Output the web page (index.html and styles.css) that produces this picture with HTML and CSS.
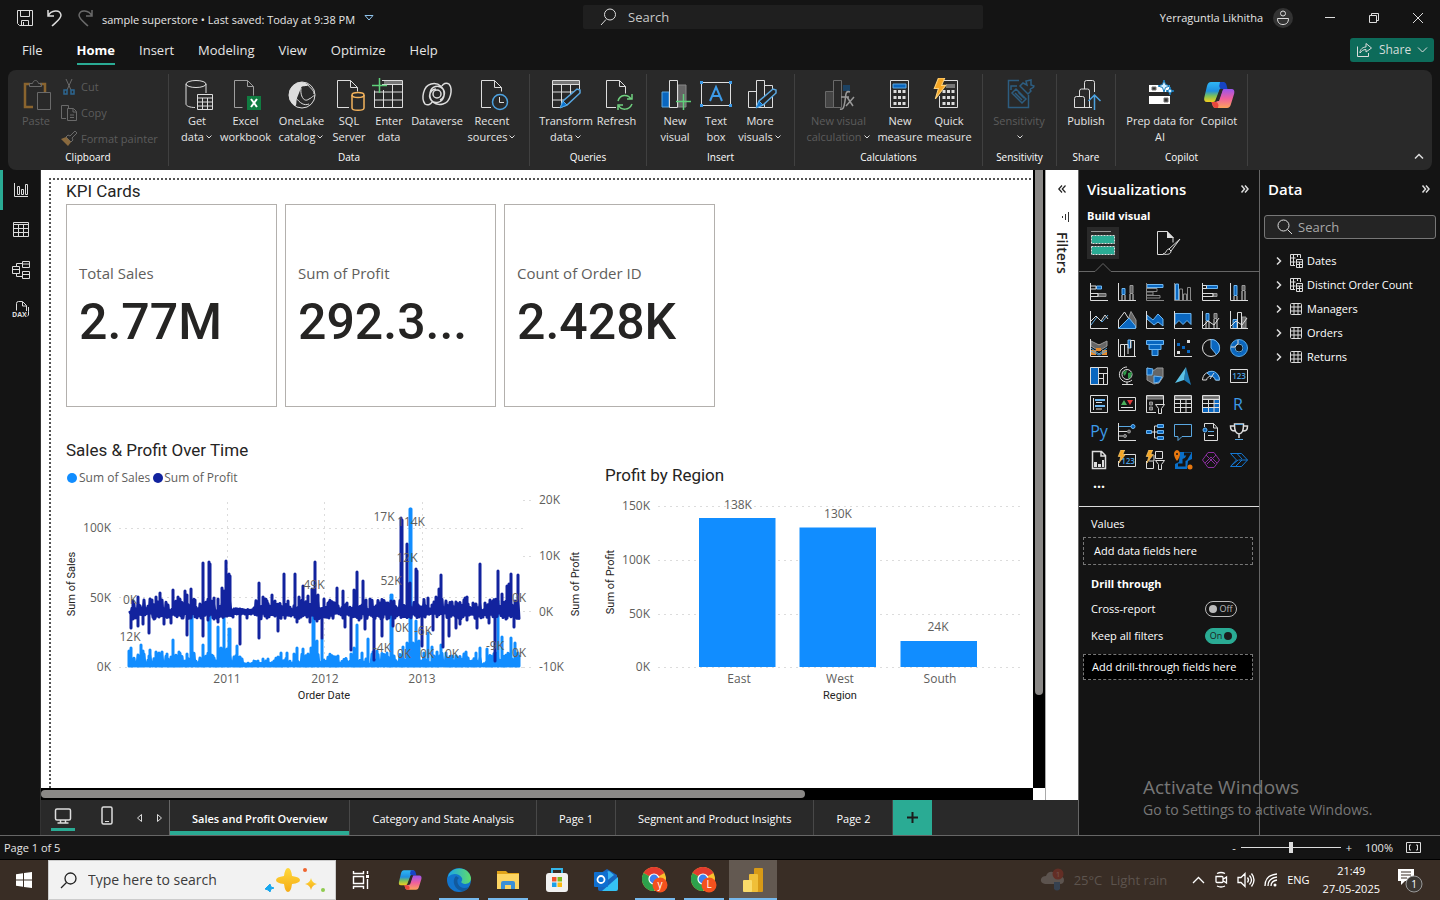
FILE: index.html
```html
<!DOCTYPE html>
<html lang="en">
<head>
<meta charset="utf-8">
<title>sample superstore</title>
<link rel="stylesheet" href="styles.css">
</head>
<body>
<svg class="defs" aria-hidden="true">
  <defs>
    <linearGradient id="cpA" x1="0" y1="0" x2="0" y2="1"><stop offset="0" stop-color="#2fb7f5"/><stop offset=".45" stop-color="#1f8fe0"/><stop offset=".7" stop-color="#7cc15a"/><stop offset="1" stop-color="#f5cf1d"/></linearGradient>
    <linearGradient id="cpB" x1="0" y1="0" x2="0" y2="1"><stop offset="0" stop-color="#9a55ee"/><stop offset=".5" stop-color="#ef5f9e"/><stop offset="1" stop-color="#fca35a"/></linearGradient>
    <linearGradient id="edge" x1="0" y1="0" x2="1" y2="0"><stop offset="0" stop-color="#1ba6e8"/><stop offset="1" stop-color="#5fdc6a"/></linearGradient>
    <linearGradient id="gold" x1="0" y1="0" x2="0" y2="1"><stop offset="0" stop-color="#ffd93b"/><stop offset="1" stop-color="#f5ab16"/></linearGradient>
    <symbol id="copilot" viewBox="0 0 32 32">
      <path d="M8 3h11c2 0 3 1 3.500 3l1 3h-4c-2 0-3 1-3.500 3l-3.500 9c-.6 2-1.500 2-4 2H4c-2.500 0-3.300-2-2.700-4.500L4 7c.7-2.600 2-4 4-4z" fill="url(#cpA)"/>
      <path d="M17 3h3c2 0 3 1 3.500 3l1 4h-5c-2 0-3-1-3.300-3z" fill="#1644c4"/>
      <path d="M24 29H13c-2 0-3-1-3.500-3L8.500 23h3c2 0 4.200-1 4.700-3l2.800-8c.6-2 1.500-2 3.500-2h6c2.500 0 3.300 2 2.700 4.500L28 25c-.7 2.600-2 4-4 4z" fill="url(#cpB)"/>
      <path d="M15 29h-2c-2 0-3-1-3.500-3l-1-3h4c2 0 2.500 1.500 3 3z" fill="#e8473c"/>
      <path d="M17 10h3l-4 12h-3z" fill="#292929"/>
    </symbol>
    <symbol id="file" viewBox="0 0 32 32"><path class="s" d="M12.500 28.500H4.500v-27h13l6 6v9M17.500 1.500v6h6"/></symbol>
    <symbol id="pen" viewBox="0 0 32 32"><path d="M11 28l2-6L27 10l3 1v3L17 26z" fill="#252525" stroke="#5aa7e0" stroke-width="1.500"/><path d="M10 29l3-7 4 4z" fill="#0a74d0" stroke="#5aa7e0"/></symbol>
    <symbol id="chev" viewBox="0 0 8 8"><path class="s" d="M1.500 2.500 4 5l2.500-2.500"/></symbol>
    <symbol id="bolt" viewBox="0 0 12 20"><path d="M5 0h6L8 7h4L2 20l3-10H1z" fill="#f5a623" stroke="#ffd27a"/></symbol>
    <symbol id="table" viewBox="0 0 16 16"><path class="s" d="M3.500 2.500h9q1 0 1 1v9q0 1-1 1h-9q-1 0-1-1v-9q0-1 1-1zM2.500 6h11M2.500 10h11M6 2.500v11M10 2.500v11"/></symbol>
    <symbol id="calctable" viewBox="0 0 16 16"><path class="s" d="M7 12.500H2.500v-11h10V5M2.500 5h5M2.500 9h5M5.500 1.500v11M9.500 1.500V4M8.500 6.500h6v8h-6zM8.500 9h6M8.500 11.500h6M11.500 9v5"/></symbol>
    <symbol id="chrome" viewBox="0 0 24 24"><circle cx="12" cy="12" r="12" fill="#f9c22e"/><path d="M12 12 1.600 6A12 12 0 0 1 22.400 6z" fill="#e33b2e"/><path d="M12 12 1.600 6A12 12 0 0 0 12 24l5-9z" fill="#2da14c"/><circle cx="12" cy="12" r="5.600" fill="#fff"/><circle cx="12" cy="12" r="4.400" fill="#3d7ff0"/></symbol>
  </defs>
</svg>

<header class="titlebar">
  <div class="quick">
    <button aria-label="Save"><svg width="18" height="18" viewBox="0 0 18 18"><path class="s" d="M1.500 1.500h15v15h-13l-2-2zM4.500 1.500v6h9v-6M5.500 16.500v-5h7v5M7.500 13v3"/></svg></button>
    <button aria-label="Undo"><svg width="18" height="18" viewBox="0 0 18 18"><path class="s thick" d="M2 1v6h6M2 7C5 1 14 0 15 6c0 4-5 7-9 11"/></svg></button>
    <button class="off" aria-label="Redo"><svg width="18" height="18" viewBox="0 0 18 18"><path class="s thick" d="M16 1v6h-6M16 7C13 1 4 0 3 6c0 4 5 7 9 11"/></svg></button>
    <span class="docname">sample superstore • Last saved: Today at 9:38 PM</span>
    <svg width="10" height="8" viewBox="0 0 10 8"><path d="M1 1.500h8L5 6z" fill="none" stroke="#8fc4ee"/></svg>
  </div>
  <label class="topsearch"><svg width="18" height="18" viewBox="0 0 18 18"><path class="s" d="M6 11.500 1 17"/><circle class="s" cx="10" cy="6.500" r="5.500"/></svg><input type="text" placeholder="Search" aria-label="Search"></label>
  <div class="account">
    <span>Yerraguntla Likhitha</span>
    <svg width="20" height="20" viewBox="0 0 20 20"><circle cx="10" cy="10" r="10" fill="#333"/><circle class="s" cx="10" cy="5.500" r="2.500"/><path class="s" d="M4.500 10.500h11c0 4-2 6-5.500 6s-5.500-2-5.500-6z"/></svg>
    <button aria-label="Minimize"><svg width="12" height="12" viewBox="0 0 12 12"><path class="s" d="M1 5.500h10"/></svg></button>
    <button aria-label="Restore"><svg width="12" height="12" viewBox="0 0 12 12"><path class="s" d="M1.500 3.500h7v7h-7zM3.500 3.500v-2h7v7h-2"/></svg></button>
    <button aria-label="Close"><svg width="12" height="12" viewBox="0 0 12 12"><path class="s" d="M1 1l10 10M11 1 1 11"/></svg></button>
  </div>
</header>

<nav class="menu">
  <a href="#" class="filemenu">File</a><a href="#" class="active">Home</a><a href="#">Insert</a><a href="#">Modeling</a><a href="#">View</a><a href="#">Optimize</a><a href="#">Help</a>
  <button class="share"><svg width="17" height="16" viewBox="0 0 17 16"><path class="s" d="M1.500 4.500v10h11V11M4 11c0-4 3-6 6-6V1.500L15.500 6 10 10V7.500C7 7.500 5.500 9 4 11z"/></svg>Share<svg width="11" height="8" viewBox="0 0 11 8"><path class="s" d="M1 1.500 5.500 6 10 1.500"/></svg></button>
</nav>

<section class="ribbon">
  <div class="group clip">
    <div class="tools">
      <button class="tool off"><svg width="32" height="32" viewBox="0 0 32 32"><path d="M13 28H5V5h5M20 5h5v8" fill="none" stroke="#8a642e" stroke-width="2.500"/><path class="s" d="M9.500 7.500v-3h3c1-4 5-4 6 0h3v3zM17.500 13.500h13v17h-13z"/></svg><span>Paste</span></button>
      <div class="stack">
        <button class="off"><svg width="16" height="16" viewBox="0 0 16 16"><path class="s" d="M5 0l5 11M11 0 6 11"/><path d="M3 11h3v4H3zM10 11h3v4h-3z" fill="none" stroke="#2c6590" stroke-width="1.500"/></svg>Cut</button>
        <button class="off"><svg width="16" height="16" viewBox="0 0 16 16"><path class="s" d="M5 13.500H.5V.500h7V3M6.500 3.500h6l3 3v9h-9zM12 3.500V7h3.500M9 10h4M9 12.500h4"/></svg>Copy</button>
        <button class="off"><svg width="16" height="16" viewBox="0 0 16 16"><path class="s" d="M5 6l5 5M5 6l2-2 2 1 5-5 2 2-5 5 1 2-2 2"/><path d="M5 6 0 8l7 7 3-4z" fill="#8a6a3e"/></svg>Format painter</button>
      </div>
    </div>
    <div class="gname">Clipboard</div>
  </div>
  <div class="group data">
    <div class="tools">
      <button class="tool"><svg width="32" height="32" viewBox="0 0 32 32"><ellipse class="s" cx="15" cy="5" rx="10" ry="3.500"/><path class="s" d="M5 5v20c0 2 4 3.500 9 3.500M25 5v9M16.500 15.500h15v15h-15zM16.500 19h15M16.500 23h15M16.500 27h15M21.500 19v11M26.500 19v11"/></svg><span>Get<br>data<svg class="cv"><use href="#chev"/></svg></span></button>
      <button class="tool"><svg width="32" height="32" viewBox="0 0 32 32"><g opacity=".65"><use href="#file"/></g><path d="M17 17h14v14H17z" fill="#107c41"/><path d="M21 20l6 8M27 20l-6 8" stroke="#fff" stroke-width="2"/></svg><span>Excel<br>workbook</span></button>
      <button class="tool"><svg width="32" height="32" viewBox="0 0 32 32"><circle class="s" cx="16" cy="16" r="13"/><path d="M15 3A13 13 0 0 0 9 27c2 0 1-5 2-8l4-10c1-3 5-1 8-3-3-2-5-3-8-3z" fill="#ddd"/><path class="s" d="M22 6c2 3 6 5 6 9M15 9c-1 8 3 15 8 11 3-1 4-4 6-3M10 19c4 5 8 8 13 6"/></svg><span>OneLake<br>catalog<svg class="cv"><use href="#chev"/></svg></span></button>
      <button class="tool"><svg width="32" height="32" viewBox="0 0 32 32"><path class="s" d="M16 28.500H4.500v-27h13l7 7v4M17.500 1.500v7h7"/><path d="M19 16v13c0 3 12 3 12 0V16" fill="none" stroke="#f2b25c" stroke-width="1.500"/><ellipse cx="25" cy="16" rx="6" ry="2.500" fill="none" stroke="#f2b25c" stroke-width="1.500"/></svg><span>SQL<br>Server</span></button>
      <button class="tool"><svg width="32" height="32" viewBox="0 0 32 32"><path d="M11 2h19v3H11z" fill="#777"/><path class="s" d="M9 1.500h20.500v27h-28v-17M9 5.500h20M1.500 13h28M1.500 21h28M10.500 11v17M19.500 6v22"/><path d="M6.500-1v15M-1 6.500h15" stroke="#5fd07a" stroke-width="1.500"/></svg><span>Enter<br>data</span></button>
      <button class="tool"><svg width="32" height="32" viewBox="0 0 32 32"><g class="s thick"><circle cx="16" cy="15" r="4"/><path d="M4 25C0 20 2 7 10 5c8-2 14 4 13 12-1 6-9 9-13 4-3-4-1-10 5-11M28 5c4 5 2 18-6 20C14 27 8 22 9 14c1-7 9-9 13-4 3 4 1 9-3 11M4 25c3 2 6 0 7-2M28 5c-3-2-6 0-7 2"/></g></svg><span>Dataverse</span></button>
      <button class="tool"><svg width="32" height="32" viewBox="0 0 32 32"><path class="s" d="M15 28.500H5.500v-27h13l7 7v4M18.500 1.500v7h7"/><circle cx="24" cy="23" r="7.500" fill="none" stroke="#4da2e0" stroke-width="1.500"/><path class="s" d="M23.500 18v5.500H28"/></svg><span>Recent<br>sources<svg class="cv"><use href="#chev"/></svg></span></button>
    </div>
    <div class="gname">Data</div>
  </div>
  <div class="group queries">
    <div class="tools">
      <button class="tool"><svg width="32" height="32" viewBox="0 0 32 32"><path d="M3 2h26v4H3z" fill="#777"/><path class="s" d="M29.500 10V1.500h-27v27h9M2.500 5.500h27M2.500 13h22M2.500 21h14M11.500 6v22M20.500 6v9"/><use href="#pen"/></svg><span>Transform<br>data<svg class="cv"><use href="#chev"/></svg></span></button>
      <button class="tool"><svg width="32" height="32" viewBox="0 0 32 32"><path class="s" d="M15 28.500H5.500v-27h13l6 6v7M18.500 1.500v6h6"/><path d="M17 22c2-7 10-7 13-2M31 15v5h-5M31 25c-3 7-11 6-13 2M17 31v-5h5" fill="none" stroke="#6fd07f" stroke-width="1.500"/></svg><span>Refresh</span></button>
    </div>
    <div class="gname">Queries</div>
  </div>
  <div class="group insert">
    <div class="tools">
      <button class="tool"><svg width="32" height="32" viewBox="0 0 32 32"><path d="M3 13h7v15H3z" fill="#0a67c0" stroke="#5aa7e0"/><path d="M19 6h8v22h-8z" fill="#666" stroke="#888"/><path class="s" d="M10.500 1.500h8v27h-8z"/><path d="M24.500 15v16M17 22.500h15" stroke="#5fd07a" stroke-width="1.500"/></svg><span>New<br>visual</span></button>
      <button class="tool"><svg width="32" height="32" viewBox="0 0 32 32"><path class="s" d="M1.500 3.500h29v23h-29z"/><path d="M0 2h3v3H0zM29 2h3v3h-3zM0 25h3v3H0zM29 25h3v3h-3z" fill="#3d9be8"/><path d="M10 22l6-14 6 14M12 17h8" fill="none" stroke="#3d9be8" stroke-width="2"/></svg><span>Text<br>box</span></button>
      <button class="tool"><svg width="32" height="32" viewBox="0 0 32 32"><path class="s" d="M4.500 12.500h8v16h-8zM12.500 1.500h8v27h-8zM20.500 6.500h8v22h-8"/><use href="#pen" x="2"/></svg><span>More<br>visuals<svg class="cv"><use href="#chev"/></svg></span></button>
    </div>
    <div class="gname">Insert</div>
  </div>
  <div class="group calcs">
    <div class="tools">
      <button class="tool off"><svg width="32" height="32" viewBox="0 0 32 32"><path d="M3 12h7v16H3zM20 6h6v6h-6z" fill="#444"/><path d="M20 6h7v6h-7z" fill="#1c4263"/><path class="s" d="M2.500 12.500h8v16h-8zM10.500 1.500h8v27h-8z"/><path d="M27 13c-5-2-4 4-5 9s-1 9-5 8M18 18h8M24 18l6 9M31 18l-8 9" fill="none" stroke="#999" stroke-width="1.500"/></svg><span>New visual<br>calculation<svg class="cv"><use href="#chev"/></svg></span></button>
      <button class="tool"><svg width="32" height="32" viewBox="0 0 32 32"><path class="s" d="M6.500 1.500h18v27h-18z"/><path d="M9 5h13v4H9z" fill="#0a67c0" stroke="#5aa7e0"/><path d="M11 11v16M15.500 11v16M20 11v16" stroke="#ddd" stroke-width="3" stroke-dasharray="3 3"/></svg><span>New<br>measure</span></button>
      <button class="tool"><svg width="32" height="32" viewBox="0 0 32 32"><path class="s" d="M10 1.500h14.500v27h-18V17"/><path d="M13 5h9v4h-9z" fill="#777"/><path d="M11 11v16M15.500 11v16M20 11v16" stroke="#ddd" stroke-width="3" stroke-dasharray="3 3"/><use href="#bolt" x="-1" y="-1" width="15" height="21"/></svg><span>Quick<br>measure</span></button>
    </div>
    <div class="gname">Calculations</div>
  </div>
  <div class="group sens">
    <div class="tools">
      <button class="tool off"><svg width="32" height="32" viewBox="0 0 32 32"><g fill="none" stroke="#2d5d80" stroke-width="1.500"><path d="M16 1.500H5.500v27h20V16M14 7H8v4M9 14l4-4 10 10-4 4zM12 14l7 7M15 13l6 6M17 7l8 8 3-3c-3-3 3-2 3-5l-3-1V1l-5 1 1 4-4-2z"/></g></svg><span>Sensitivity<br><svg class="cv"><use href="#chev"/></svg></span></button>
    </div>
    <div class="gname">Sensitivity</div>
  </div>
  <div class="group pub">
    <div class="tools">
      <button class="tool"><svg width="32" height="32" viewBox="0 0 32 32"><path class="s" d="M16 28.500H4.500v-9q0-2 2-2h6q2 0 2 2v9M9.500 17v-5q0-2 2-2h6q2 0 2 2v16.500M14.500 10V3.500q0-2 2-2h6q2 0 2 2V13M16 28.500h6"/><path d="M24.500 31V16M18.500 22l6-6 6 6" fill="none" stroke="#4da2e0" stroke-width="1.500"/></svg><span>Publish</span></button>
    </div>
    <div class="gname">Share</div>
  </div>
  <div class="group cop">
    <div class="tools">
      <button class="tool"><svg width="32" height="32" viewBox="0 0 32 32"><path d="M5 6h21v7H5zM5 17h21v8H5z" fill="#fff"/><path d="M8 8h4v3H8zM20 19h4v4h-4z" fill="#333" stroke="#777"/><path d="M20 1l1.500 4.500L26 7l-4.500 1.500L20 13l-1.500-4.500L14 7l4.500-1.500zM26 8l1 3 3 1-3 1-1 3-1-3-3-1 3-1z" fill="#d4efff" stroke="#1478b8"/></svg><span>Prep data for<br>AI</span></button>
      <button class="tool"><svg width="32" height="32"><use href="#copilot"/></svg><span>Copilot</span></button>
    </div>
    <div class="gname">Copilot</div>
  </div>
  <button class="collapse" aria-label="Collapse ribbon"><svg width="10" height="7" viewBox="0 0 10 7"><path class="s thick" d="M1 5.500 5 1.500l4 4"/></svg></button>
</section>

<main class="main">
  <nav class="views">
    <button class="active" aria-label="Report view"><svg width="16" height="16" viewBox="0 0 16 16"><path class="s" d="M1.500 1v13.500H15M4.500 4.500h2v8h-2zM8.500 7.500h2v5h-2zM12.500 2.500h2v10h-2z"/></svg></button>
    <button aria-label="Table view"><svg width="18" height="18" viewBox="0 0 18 18"><path class="s" d="M1.500 1.500h15v14h-15zM1.500 3.500h15M1.500 7.500h15M1.500 11.500h15M6.500 4v12M11.500 4v12"/></svg></button>
    <button aria-label="Model view"><svg width="18" height="18" viewBox="0 0 18 18"><path class="s" d="M.500 5.500h7v7h-7zM.500 8.500h7M10.500 .500h7v6h-7zM10.500 3h7M10.500 10.500h7v7h-7zM10.500 13.500h7M10 2.500H4.500v3M4.500 12.500v3H10"/></svg></button>
    <button aria-label="DAX query view"><svg width="18" height="18" viewBox="0 0 18 18"><path class="s" d="M4.500 9.500v-7q0-2 2-2h4l4 4v9M10.500 1v4h4M16.500 6v8l-2 2"/><text x="0" y="16" class="dax">DAX</text></svg></button>
  </nav>

  <div class="work">
    <div class="canvasrow">
      <div class="scroller">
        <div class="page">
          <h2>KPI Cards</h2>
          <div class="cards">
            <div class="card"><span>Total Sales</span><strong>2.77M</strong></div>
            <div class="card"><span>Sum of Profit</span><strong>292.3...</strong></div>
            <div class="card"><span>Count of Order ID</span><strong>2.428K</strong></div>
          </div>
          <div class="charts">
            <div class="chart">
              <h2>Sales &amp; Profit Over Time</h2>
              <div class="legend"><i class="dot sales"></i>Sum of Sales<i class="dot profit"></i>Sum of Profit</div>
              <svg class="plot" width="530" height="215" viewBox="66 490 530 215">
                <path class="grid" d="M119 528.500h408M119 597.500h408M119 667.500h408M227.500 502v165M324.500 502v165M422.500 502v165M523 500.500h8M523 556.500h8M523 611.500h8M523 667.500h8"/>
                <path id="sales" class="line sales"/>
                <path id="profit" class="line profit"/>
                <g class="end"><text x="111" y="532">100K</text><text x="111" y="602">50K</text><text x="111" y="671">0K</text></g>
                <g><text x="539" y="504">20K</text><text x="539" y="560">10K</text><text x="539" y="616">0K</text><text x="539" y="671">-10K</text></g>
                <g class="mid"><text x="227" y="683">2011</text><text x="325" y="683">2012</text><text x="422" y="683">2013</text>
                <text x="130" y="604">0K</text><text x="130" y="641">12K</text><text x="314" y="589">49K</text><text x="384" y="521">17K</text><text x="411" y="526">114K</text><text x="407" y="562">12K</text><text x="391" y="585">52K</text><text x="402" y="632">0K</text><text x="423" y="635">-6K</text><text x="382" y="652">-4K</text><text x="404" y="658">0K</text><text x="427" y="658">0K</text><text x="452" y="658">0K</text><text x="495" y="650">-9K</text><text x="519" y="602">0K</text><text x="519" y="657">0K</text></g>
                <g class="mid axis"><text x="324" y="699">Order Date</text><text transform="translate(75 584) rotate(-90)">Sum of Sales</text><text transform="translate(579 584) rotate(-90)">Sum of Profit</text></g>
              </svg>
            </div>
            <div class="chart region">
              <h2>Profit by Region</h2>
              <svg class="plot" width="420" height="215" viewBox="605 490 420 215">
                <path class="grid" d="M658 506.500h364M658 560.500h364M658 614.500h364M658 667.500h364"/>
                <path class="bar" d="M699 518h76.500v149H699zM799.500 527.500H876V667h-76.500zM900.500 641H977v26h-76.500z"/>
                <g class="end"><text x="650" y="510">150K</text><text x="650" y="564">100K</text><text x="650" y="618">50K</text><text x="650" y="671">0K</text></g>
                <g class="mid"><text x="738" y="509">138K</text><text x="838" y="518">130K</text><text x="938" y="631">24K</text><text x="739" y="683">East</text><text x="840" y="683">West</text><text x="940" y="683">South</text></g>
                <g class="mid axis"><text x="840" y="699">Region</text><text transform="translate(614 582) rotate(-90)">Sum of Profit</text></g>
              </svg>
            </div>
          </div>
        </div>
        <div class="vbar"><i></i></div>
        <div class="hbar"><i></i></div>
        <div class="corner"></div>
      </div>
      <aside class="filters"><button aria-label="Expand filters"><svg width="8" height="8" viewBox="0 0 8 8"><path d="M4 .500.800 4 4 7.500M7.500.500 4.300 4l3.200 3.500" fill="none" stroke="#222" stroke-width="1.200"/></svg></button><svg width="10" height="10" viewBox="0 0 10 10"><path d="M8.500 0v10M5.500 2v6M2.500 4v2" stroke="#333"/></svg><span>Filters</span></aside>
    </div>
    <nav class="pages">
      <button class="dev on" aria-label="Desktop layout"><svg width="18" height="18" viewBox="0 0 18 18"><path class="s thick" d="M3 2h12q1.500 0 1.500 1.500v8q0 1.500-1.500 1.500H3q-1.500 0-1.500-1.500v-8Q1.500 2 3 2zM6.500 13v3M11.500 13v3M3.500 16h11"/></svg></button>
      <button class="dev" aria-label="Phone layout"><svg width="18" height="20" viewBox="0 0 18 20"><rect class="s thick" x="4" y="1" width="10" height="17" rx="1.500"/><path class="s" d="M7 15.500h4"/></svg></button>
      <button class="arr" aria-label="Previous page"><svg width="7" height="10" viewBox="0 0 7 10"><path class="s" d="M5.500 1.500v7L1.500 5z"/></svg></button>
      <button class="arr" aria-label="Next page"><svg width="7" height="10" viewBox="0 0 7 10"><path class="s" d="M1.500 1.500v7l4-3.500z"/></svg></button>
      <button class="tab active">Sales and Profit Overview</button><button class="tab">Category and State Analysis</button><button class="tab">Page 1</button><button class="tab">Segment and Product Insights</button><button class="tab">Page 2</button><button class="add" aria-label="New page"><svg width="11" height="11" viewBox="0 0 11 11"><path d="M5.500 0v11M0 5.500h11" stroke="#1b1b1b" stroke-width="2"/></svg></button>
    </nav>
  </div>

  <aside class="viz">
    <div class="phead"><h3>Visualizations</h3><svg width="8" height="8" viewBox="0 0 8 8"><path class="s thick" d="M.500.500 3.500 4l-3 3.500M4 .500 7 4 4 7.500"/></svg></div>
    <h4>Build visual</h4>
    <div class="modes">
      <button class="on" aria-label="Build visual"><svg width="24" height="26" viewBox="0 0 24 26"><path d="M0 1.500h20" stroke="#999"/><path d="M.5 5.500h23v8H.5zM.5 16.500h23v8H.5z" fill="#2aab94" stroke="#ddd" stroke-dasharray="2 1"/></svg></button>
      <button aria-label="Format visual"><svg width="26" height="26" viewBox="0 0 26 26"><path class="s" d="M7 24.500H1.500v-23H11l6 6v5M11.500 1.500v6H17"/><path d="M11 1l7 7h-7z" fill="#ddd"/><path class="s" d="M24 9 13 19l2 2zM13 19c-3 0-2 4-6 5 5 1 8 0 8-3"/></svg></button>
    </div>
    <svg class="notch" width="181" height="10" viewBox="0 0 181 10"><path d="M0 8.500h16l8-8 8 8h149" fill="none" stroke="#666"/></svg>
    <div class="icons">
      <svg viewBox="0 0 18 18"><path class="g" d="M8 10.500h8v3H8z"/><path class="b" d="M6.500 3h5v3h-5z"/><path class="s" d="M.500 0v17.500H18M.500 3H6v3H.500M.500 10.500H8v3H.500"/></svg>
      <svg viewBox="0 0 18 18"><path class="g" d="M12 2.500h3v8h-3z"/><path class="b" d="M4 5.500h3v6H4z"/><path class="s" d="M.500 0v17.500H18M4 12v5M7 12v5M12 11v6M15 11v6"/></svg>
      <svg viewBox="0 0 18 18"><path class="b" d="M1 1.500h16v3H1z"/><path class="s g2" d="M.500 0v17.500H18M1 5.500h10v3H1M1 9h6v3H1M1 12.500h13V15H1"/></svg>
      <svg viewBox="0 0 18 18"><path class="b" d="M1.500 1h3v16h-3z"/><path class="s g2" d="M.500 0v17.500H18M5.500 17V6h3v11M9.500 17v-6h3v6M13.500 17V4.500h3V17"/></svg>
      <svg viewBox="0 0 18 18"><path class="b" d="M4.500 2.500h11v3h-11z"/><path class="g" d="M11 10.500h4v3h-4z"/><path class="s" d="M.500 0v17.500H18M.500 2.500h4v3h-4M.500 10.500H11v3H.500"/></svg>
      <svg viewBox="0 0 18 18"><path class="b" d="M4 2.500h3v10H4z"/><path class="g" d="M12 2.500h3v5h-3z"/><path class="s" d="M.500 0v17.500H18M4 13v4M7 13v4M12 8v9M15 8v9"/></svg>

      <svg viewBox="0 0 18 18"><path class="l" d="M1 14 7 6l5 5 6-7"/><path class="s" d="M.500 0v17.500H18M1 10l5-5 5 5 4-6 3 4"/></svg>
      <svg viewBox="0 0 18 18"><path class="g" d="M7 17 13 .500 18 9v8z"/><path class="s" d="M.500 17V9l6-8 5 8"/><path class="b" d="M.500 17.500 11 7l6.500 8v2.500z"/></svg>
      <svg viewBox="0 0 18 18"><path class="b" d="M1 4l6 5 5-6 5 5v7l-5-4-4 3-7-6z"/><path class="s" d="M.500 0v17.500H18"/></svg>
      <svg viewBox="0 0 18 18"><path class="b" d="M1 2.500h16v11l-4-4-4 4-4-4-4 4z"/><path class="s" d="M.500 0v17.500H18"/></svg>
      <svg viewBox="0 0 18 18"><path class="b" d="M4 2.500h3v7H4z"/><path class="g" d="M12 2.500h3v5h-3z"/><path class="s" d="M.500 0v17.500H18M4 10v7M7 10v7M12 8v9M15 8v9M1 15l5-5 6 4 5-7"/></svg>
      <svg viewBox="0 0 18 18"><path class="b" d="M3 8.500h4v9H3z"/><path class="g" d="M12 6h4v11h-4z"/><path class="s" d="M.500 0v17.500H18M7.500 17V1.500h4V17M1 15l5-5 6 4 5-7"/></svg>

      <svg viewBox="0 0 18 18"><path d="M1 11h5v5H1zM12 11h5v5h-5zM6 5h5v5H6z" fill="#e58a2b"/><path class="g" d="M1 2l8 4 8-4v5l-8 5-8-5z"/><path class="l" d="M1 9l8 6 8-6M1 12l8 4 8-4"/><path d="M6 9h5v3H6z" fill="#e58a2b"/><path class="s" d="M.500 0v17.500H18"/></svg>
      <svg viewBox="0 0 18 18"><path class="b" d="M10 1h3v8h-3z"/><path class="s" d="M.500 0v17.500H18M2.500 17V5.500h4V17M6.500 5.500H10V15M12.500 9V1.500h4V17"/></svg>
      <svg viewBox="0 0 18 18"><path class="b" d="M.500 1.500h17v4H.500zM3 5.500h12v5H3zM6 10.500h6v6H6z"/></svg>
      <svg viewBox="0 0 18 18"><path d="M3 4h3v3H3zM8 7h3v3H8zM13 11h3v3h-3z" fill="#0a67c0"/><path d="M13 1h3v3h-3zM3 12h3v3H3z" fill="#ddd"/><path class="s" d="M.500 0v17.500H18"/></svg>
      <svg viewBox="0 0 18 18"><circle class="s" cx="9" cy="9" r="8.500"/><path class="b" d="M9 .500A8.500 8.500 0 0 1 14.500 15.500L9 9z"/></svg>
      <svg viewBox="0 0 18 18"><circle cx="9" cy="9" r="6.500" fill="none" stroke="#0a67c0" stroke-width="4"/><circle class="l" cx="9" cy="9" r="8.500"/><circle class="l" cx="9" cy="9" r="4"/><path d="M1 8h4q1-2 3-3V1" class="s"/></svg>

      <svg viewBox="0 0 18 18"><path d="M0 0h8v18H0z" fill="#0a67c0"/><path class="s" d="M.500.500h17v17H.500zM8.500 1v16M9 6.500h8M13.500 7v10M9 11.500h4"/></svg>
      <svg viewBox="0 0 18 18"><circle class="s" cx="9" cy="7.500" r="5"/><path d="M5 5l4-2-1 4-2 2zM10 6l4-1-1 5-3 2z" fill="#2f9a48"/><path class="s" d="M9 0A7.500 7.500 0 1 0 14 13M9 15v2M4 17.500h11"/></svg>
      <svg viewBox="0 0 18 18"><path class="g" d="M1 1l6 3 4-3h6v9l-4 6-5 1-7-4z"/><path class="b" d="M1 1l6 1-1 6H1zM8 9l8 1-3 5-5 1z"/></svg>
      <svg viewBox="0 0 18 18"><path d="M12 0l5 18-7-5z" fill="#1d7ab5"/><path d="M12 0 1 16l9-3z" fill="#5cc3e8"/></svg>
      <svg viewBox="0 0 18 18"><path class="s" d="M.500 13C1 2 17 2 17.500 13h-4c-1-5-8-5-9 0z"/><path class="b" d="M5 6c5-4 12-1 12.500 7h-4c-1-3-3-4-5-4z"/><path class="s" d="M8 12l4-6"/></svg>
      <svg viewBox="0 0 18 18"><path class="s" d="M.500 2.500h17v13H.500z"/><text x="9" y="12" class="num">123</text></svg>

      <svg viewBox="0 0 18 18"><path class="s" d="M.500.500h17v17H.500zM3.500 3v12M6 7.500h6M6 14h6"/><path d="M5 5h10M5 11h10" stroke="#6fb7f0" stroke-width="2"/></svg>
      <svg viewBox="0 0 18 18"><path class="s" d="M.500 2.500h17v13H.500zM3 12.500h12"/><path d="M3 10l3-5 3 5z" fill="#49b05c"/><path d="M9 5h6l-3 5z" fill="#e23b3b"/></svg>
      <svg viewBox="0 0 18 18"><path class="g" d="M1 1h16v3H1zM3.500 7h3v3h-3zM3.500 12h3v3h-3z"/><path class="s" d="M10 17.500H.500V.500h17V9M9.500 9.500h9l-3 4v5h-3v-5z"/></svg>
      <svg viewBox="0 0 18 18"><path class="g" d="M1 1h16v3H1z"/><path class="s" d="M.500.500h17v17H.500zM1 4.500h16M1 8.500h16M1 12.500h16M6.500 5v12M12 5v12"/></svg>
      <svg viewBox="0 0 18 18"><path class="g" d="M1 1h16v3H1z"/><path d="M12 5h6v13H12zM1 13h11v5H1z" fill="#0a67c0"/><path class="s" d="M.500.500h17v17H.500zM1 4.500h16M1 8.500h16M1 12.500h16M6.500 5v12M12 5v12"/></svg>
      <svg viewBox="0 0 18 18"><text x="8" y="15" class="big">R</text></svg>

      <svg viewBox="0 0 18 18"><text x="9" y="14" class="big">Py</text></svg>
      <svg viewBox="0 0 18 18"><path class="l" d="M1 3.500h14"/><circle class="b" cx="15" cy="3.500" r="2"/><path class="s" d="M.500 0v17.500H18M1 8.500h8M1 13h4"/><circle class="g" cx="11" cy="8.500" r="1.500"/><circle class="g" cx="7" cy="13" r="1.500"/></svg>
      <svg viewBox="0 0 18 18"><path class="s" d="M5 9h6M8.500 3v12M8.500 3H11M8.500 15H11"/><path class="b" d="M.500 7.500h5v3h-5zM11.500 1.500h6v3h-6zM11.500 7.500h6v3h-6zM11.500 13.500h6v3h-6z"/></svg>
      <svg viewBox="0 0 18 18"><path class="l" d="M.500 1.500h17v12H8l-4 4v-4H.500z"/></svg>
      <svg viewBox="0 0 18 18"><path class="s" d="M2.500 10v7.500h13V5l-4-4.500h-9V4M11.500.500V5h4M6 12.500h6"/><path class="l" d="M6 8.500h6"/><circle class="b" cx="3" cy="7" r="2"/></svg>
      <svg viewBox="0 0 18 18"><path class="s thick" d="M4.500 1c0 7 1 9 4.500 10 3.500-1 4.500-3 4.500-10zM4.500 3h-4c0 4 1 5 5 5M13.500 3h4c0 4-1 5-5 5M9 11v4"/><path class="l" d="M5 1.500h8M5 16.500h8"/></svg>

      <svg viewBox="0 0 18 18"><path class="s thick" d="M2.500 .500h9l4 4v13h-13zM11 .500V5h4"/><path d="M4 11h3v5H4zM8 13h3v3H8zM12 9h2v7h-2z" fill="#ddd"/></svg>
      <svg viewBox="0 0 18 18"><path class="s" d="M6 3.500h11.500v12H.500V10"/><text x="10" y="13" class="num">123</text><use href="#bolt" x="-1" y="-1" width="9" height="13"/></svg>
      <svg viewBox="0 0 18 18"><path class="s" d="M9.500.500h7v7h-7zM.500 10v7.500h7v-7M9.500 9.500h9l-3 4v5h-3v-5zM3 10h5V4"/><use href="#bolt" x="-1" y="-1" width="9" height="13"/></svg>
      <svg viewBox="0 0 18 18"><path d="M6 1h12v7l-4 2-1 8H1v-5l4-2z" fill="#0a6fc8"/><path d="M10 3h5l-3 5-2 1v5H4" fill="none" stroke="#141414" stroke-width="3"/><path d="M3 10C-1 5-1 0 3-1c4 1 4 6 0 11z" fill="#e8780f"/><circle cx="3" cy="3" r="1" fill="#141414"/><circle cx="16" cy="16" r="2.500" fill="#e8780f"/></svg>
      <svg viewBox="0 0 18 18"><path d="M6 1.500h6l5.500 7.500-5.500 7.500H6L.500 9zM4 4l9 9M14 4l-9 9M3 12l6-6 6 6" fill="none" stroke="#8a2f9e"/></svg>
      <svg viewBox="0 0 18 18"><path d="M.500 2.500h11l6 6.500-6 6.500H.500l6-6.500zM7 2.500 12 8M8.500 9h9M2 14l6-5M6 15l6-6" fill="none" stroke="#1478d4"/></svg>
    </div>
    <button class="more" aria-label="More visuals">···</button>
    <div class="wells">
      <p>Values</p>
      <div class="well">Add data fields here</div>
      <h4>Drill through</h4>
      <label class="sw">Cross-report<input type="checkbox"><span class="track"><i></i>Off</span></label>
      <label class="sw on">Keep all filters<input type="checkbox" checked><span class="track">On<i></i></span></label>
      <div class="well dark">Add drill-through fields here</div>
    </div>
  </aside>

  <aside class="fields">
    <div class="phead"><h3>Data</h3><svg width="8" height="8" viewBox="0 0 8 8"><path class="s thick" d="M.500.500 3.500 4l-3 3.500M4 .500 7 4 4 7.500"/></svg></div>
    <label class="fsearch"><svg width="16" height="16" viewBox="0 0 16 16"><circle class="s" cx="6.500" cy="6.500" r="5.500"/><path class="s" d="M10.500 10.500 15 15"/></svg><input type="text" placeholder="Search" aria-label="Search fields"></label>
    <ul>
      <li><svg class="ex" viewBox="0 0 6 8"><path class="s thick" d="M1 .500 4.500 4 1 7.500"/></svg><svg width="16" height="16"><use href="#calctable"/></svg>Dates</li>
      <li><svg class="ex" viewBox="0 0 6 8"><path class="s thick" d="M1 .500 4.500 4 1 7.500"/></svg><svg width="16" height="16"><use href="#calctable"/></svg>Distinct Order Count</li>
      <li><svg class="ex" viewBox="0 0 6 8"><path class="s thick" d="M1 .500 4.500 4 1 7.500"/></svg><svg width="16" height="16"><use href="#table"/></svg>Managers</li>
      <li><svg class="ex" viewBox="0 0 6 8"><path class="s thick" d="M1 .500 4.500 4 1 7.500"/></svg><svg width="16" height="16"><use href="#table"/></svg>Orders</li>
      <li><svg class="ex" viewBox="0 0 6 8"><path class="s thick" d="M1 .500 4.500 4 1 7.500"/></svg><svg width="16" height="16"><use href="#table"/></svg>Returns</li>
    </ul>
  </aside>
  <div class="watermark"><b>Activate Windows</b><span>Go to Settings to activate Windows.</span></div>
</main>

<footer class="status"><span>Page 1 of 5</span><div class="zoom"><span>-</span><input type="range" min="0" max="100" value="50" aria-label="Zoom"><span>+</span><span class="pct">100%</span><svg width="15" height="11" viewBox="0 0 15 11"><path class="s" d="M.500.500h14v10H.500zM5 3H3.500v5H5M10 3h1.500v5H10"/></svg></div></footer>

<div class="taskbar">
  <button class="start" aria-label="Start"><svg width="16" height="16" viewBox="0 0 16 16"><path d="M0 2.200 7 1.200v6.300H0zM8 1l8-1v7.500H8zM0 8.500h7v6.300l-7-1zM8 8.500h8V16l-8-1z" fill="#fff"/></svg></button>
  <label class="winsearch"><svg width="17" height="17" viewBox="0 0 17 17"><circle cx="10.500" cy="6.500" r="5.500" fill="none" stroke="#222" stroke-width="1.300"/><path d="M6.500 10.500 1 16" stroke="#222" stroke-width="1.300"/></svg><input type="text" placeholder="Type here to search" aria-label="Type here to search"><svg width="62" height="26" viewBox="0 0 62 26"><path d="M24 1q3 0 4 8 8 1 8 4t-8 4q-1 8-4 8t-4-8q-8-1-8-4t8-4q1-8 4-8z" fill="url(#gold)"/><path d="M47 11q1 5 6 6-5 1-6 6-1-5-6-6 5-1 6-6z" fill="url(#gold)"/><path d="M6 17l1 3 3 1-3 1-1 3-2-2-3-1 2-2z" fill="#18a7ee" stroke="#18a7ee"/><circle cx="41" cy="3" r="2" fill="#f0652f"/><circle cx="59" cy="23" r="2" fill="#8fcb4f"/></svg></label>
  <div class="apps">
    <button aria-label="Task view"><svg width="18" height="18" viewBox="0 0 18 18"><path d="M1.500 0v2.500h10V0M1.500 5.500h10v7h-10zM1.500 18v-2.500h10V18M15.500 0v3M15.500 8v10" fill="none" stroke="#fff" stroke-width="1.400"/><path d="M14 4h3v3h-3z" fill="#fff"/></svg></button>
    <button aria-label="Copilot"><svg width="24" height="24"><use href="#copilot"/></svg></button>
    <button class="run" aria-label="Edge"><svg width="24" height="24" viewBox="0 0 24 24"><circle cx="12" cy="12" r="12" fill="#1274cc"/><path d="M1 9C3-2 22-3 24 10c0 6-6 7-9 5-2-1 1-2 0-5C12 5 5 5 1 9z" fill="url(#edge)"/><path d="M9 8c-5 5-1 14 6 15 4 0 6-2 7-4-5 2-9 1-11-3-1-3-1-5 1-6z" fill="#125a9e"/></svg></button>
    <button class="run" aria-label="File Explorer"><svg width="24" height="24" viewBox="0 0 24 24"><path d="M1 3h9l2 2h11v16H1z" fill="#e0a31a"/><path d="M1 6h22v15H1z" fill="#fcd462"/><path d="M5 21v-6q0-2 2-2h10q2 0 2 2v6h-4v-4H9v4z" fill="#3b8fd6"/></svg></button>
    <button aria-label="Store"><svg width="24" height="24" viewBox="0 0 24 24"><path d="M7 6V1h10v5" fill="none" stroke="#35b6ea" stroke-width="2"/><rect x="1" y="5" width="22" height="19" rx="3" fill="#f1f1f1"/><path d="M7 9h4.500v4.500H7z" fill="#f0512a"/><path d="M12.500 9H17v4.500h-4.500z" fill="#7fba1c"/><path d="M7 14.500h4.500V19H7z" fill="#1a9fe8"/><path d="M12.500 14.500H17V19h-4.500z" fill="#fbb910"/></svg></button>
    <button aria-label="Outlook"><svg width="24" height="24" viewBox="0 0 24 24"><path d="M4 7l9-6 10 6v14q0 2-2 2H6q-2 0-2-2z" fill="#1765bd"/><path d="M6 7 15 3l5 4-10 8z" fill="#38b2f0"/><path d="M24 9v12q0 2-2 2H8z" fill="#35c2f4"/><rect y="4" width="14" height="15" rx="1" fill="#0f6fd0"/><circle cx="7" cy="11.500" r="3.500" fill="none" stroke="#fff" stroke-width="1.800"/></svg></button>
    <button class="run" aria-label="Chrome y"><svg width="26" height="26" viewBox="0 0 26 26"><use href="#chrome" width="24" height="24"/><circle cx="18" cy="18" r="7.500" fill="#f4511e"/><text x="18" y="21" class="badge">y</text></svg></button>
    <button class="run" aria-label="Chrome L"><svg width="26" height="26" viewBox="0 0 26 26"><use href="#chrome" width="24" height="24"/><circle cx="18" cy="18" r="7.500" fill="#f4511e"/><text x="18" y="21" class="badge">L</text></svg></button>
    <button class="run cur" aria-label="Power BI"><svg width="24" height="24" viewBox="0 0 24 24"><rect x="13" width="9" height="24" rx="1" fill="#d89a16"/><rect x="8" y="6" width="9" height="18" rx="1" fill="#f0bf38"/><rect x="2" y="12" width="9" height="12" rx="1" fill="#fadb6a"/></svg></button>
  </div>
  <div class="tray">
    <div class="weather"><svg width="26" height="24" viewBox="0 0 26 24"><path d="M5 16q-5-1-4-5 1-3 5-3 2-5 7-4 5 1 5 4 6 0 6 4t-4 4z" fill="#5c534e"/><path d="M14 14h6v7q-3 3-6 0z" fill="#364150"/><circle cx="18" cy="6" r="5.500" fill="#632e25"/><text x="18" y="9" class="tiny">1</text></svg><span>25°C</span><span>Light rain</span></div>
    <svg width="13" height="8" viewBox="0 0 13 8"><path class="w" d="M1 7l5.500-5.500L12 7"/></svg>
    <svg width="14" height="18" viewBox="0 0 14 18"><path class="w" d="M2 5.500h6q1 0 1 1v4q0 1-1 1H3q-1 0-1-1zM9.500 8l3-2v6l-3-2M3 2.500q4-2 8 0M3 15q4 2 8 0"/></svg>
    <svg width="18" height="16" viewBox="0 0 18 16"><path class="w" d="M1 5.500h3l4-4v13l-4-4H1zM10.500 5.500q2 2.500 0 5M12.500 3.500q4 4.500 0 9M14.500 1.500q5 6.500 0 13"/></svg>
    <svg width="14" height="14" viewBox="0 0 14 14"><path class="w" d="M1 13Q1 2 13 1M4 13q0-8 9-9M7 13q0-5 6-6"/><circle cx="11" cy="12" r="1.500" fill="#fff"/></svg>
    <span class="lang">ENG</span>
    <div class="clock"><span>21:49</span><span>27-05-2025</span></div>
    <svg width="26" height="26" viewBox="0 0 26 26"><path d="M1 2h16v12H8l-4 4v-4H1z" fill="#fff"/><path d="M4 5h10M4 8h10M4 11h6" stroke="#3a2e26"/><circle cx="17" cy="17" r="8" fill="#3b3733" stroke="#999"/><text x="17" y="21" class="badge">1</text></svg>
  </div>
</div>
<script src="chart.js"></script>
</body>
</html>
```

FILE: styles.css
```css
* { box-sizing: border-box; }
body { margin: 0; height: 100vh; display: flex; flex-direction: column; overflow: hidden; background: #141414; color: #e6e6e6; font: 11px/16px "Open Sans", "Noto Sans", sans-serif; }
button { background: none; border: 0; padding: 0; margin: 0; color: inherit; font: inherit; display: flex; align-items: center; justify-content: center; }
input { font: inherit; color: inherit; background: none; border: 0; outline: 0; padding: 0; margin: 0; min-width: 0; }
input::placeholder { color: inherit; opacity: 1; }
a { color: inherit; text-decoration: none; }
h2, h3, h4, p, ul { margin: 0; padding: 0; list-style: none; }
svg { flex: none; display: block; overflow: visible; }
.defs { position: absolute; width: 0; height: 0; }
.s { fill: none; stroke: #ddd; }
.thick { stroke-width: 1.5; }
.w { fill: none; stroke: #fff; stroke-width: 1.3; }
.off { color: #5c5c5c; }
.off .s { stroke: #6a6a6a; }

.titlebar { display: grid; grid-template-columns: 583fr 400px 457fr; height: 35px; flex: none; }
.quick { display: flex; align-items: center; gap: 12px; padding-left: 16px; }
.quick .docname { padding: 5px 0 0; margin-left: -4px; }
.quick > svg { margin-left: -3px; }
.topsearch { display: flex; align-items: center; gap: 10px; height: 24px; margin-top: 5px; padding-left: 17px; background: #1f1f1f; border-radius: 2px; font-size: 13px; color: #c8c8c8; }
.account { display: flex; align-items: center; justify-content: flex-end; padding-right: 16px; }
.account > svg { margin: 0 31px 0 10px; }
.account button + button { margin-left: 32px; }

.menu { display: flex; height: 35px; flex: none; padding-left: 22px; gap: 24px; font-size: 13px; line-height: 30px; }
.menu a { height: 30px; border-bottom: 2px solid transparent; }
.menu .filemenu { margin-right: 10px; }
.menu .active { font-weight: 700; color: #fff; border-color: #2aab94; }
.share { margin: 3px 6px 0 auto; width: 84px; height: 24px; gap: 6px; background: #0d6b5a; border-radius: 3px; font-size: 12px; color: #d5ddda; }

.ribbon { display: flex; margin: 0 8px; height: 100px; flex: none; background: #292929; border-radius: 8px; position: relative; }
.group { display: flex; flex-direction: column; justify-content: space-between; border-right: 1px solid #404040; margin: 4px 0; padding: 5px 0 2px; }
.gname { text-align: center; font-size: 10px; line-height: 14px; color: #fff; font-weight: 500; }
.tools { display: grid; justify-content: start; padding-left: 7px; }
.tool { flex-direction: column; justify-content: flex-start; gap: 2px; white-space: nowrap; font-weight: 500; }
.tool span { width: max-content; text-align: center; }
.cv { width: 8px; height: 8px; display: inline-block; margin-left: 1px; }
.clip { width: 161px; }
.clip .tools { grid-template-columns: 40px 1fr; gap: 5px; padding-left: 8px; }
.stack { display: flex; flex-direction: column; gap: 10px; align-items: flex-start; }
.stack button { gap: 4px; white-space: nowrap; }
.data { width: 361px; }
.data .tools { grid-template-columns: 42px 55px 57px 38px 42px 54px 56px; }
.queries { width: 117px; }
.queries .tools { grid-template-columns: 58px 43px; }
.insert { width: 148px; }
.insert .tools { grid-template-columns: 42px 40px 48px; }
.calcs { width: 188px; }
.calcs .tools { grid-template-columns: 73px 50px 48px; }
.sens { width: 74px; }
.sens .tools { grid-template-columns: 58px; }
.pub { width: 59px; }
.pub .tools { grid-template-columns: 44px; }
.cop { width: 132px; }
.cop .tools { grid-template-columns: 74px 44px; }
.collapse { margin: auto 8px 10px auto; }

.main { flex: 1; display: flex; min-height: 0; position: relative; border-bottom: 1px solid #666; }
.views { width: 41px; border-right: 1px solid #333; display: flex; flex-direction: column; }
.views button { height: 40px; border-left: 3px solid transparent; padding-right: 2px; }
.views .active { border-color: #2aab94; }
.dax { font: 700 7px "Open Sans", sans-serif; fill: #ddd; stroke: #141414; stroke-width: 2px; paint-order: stroke; }
.work { flex: 1; min-width: 0; display: flex; flex-direction: column; }
.canvasrow { flex: 1; display: flex; min-height: 0; }
.scroller { flex: 1; min-width: 0; display: grid; grid-template: minmax(0, 1fr) 12px / minmax(0, 1fr) 12px; background: #000; }
.page { background: #fff; overflow: hidden; color: #252423; padding: 11px 0 0 25px; background-image: repeating-linear-gradient(90deg, #555 0 2px, transparent 2px 4px), repeating-linear-gradient(#555 0 2px, transparent 2px 4px); background-size: 100% 2px, 2px 100%; background-position: 8px 8px, 8px 8px; background-repeat: no-repeat; }
.page h2 { font: 400 17px/20px Roboto, sans-serif; }
.vbar { padding: 0 2px; }
.vbar i { display: block; height: 85%; background: #8a8886; border-radius: 0 0 4px 4px; }
.hbar { padding: 2px 0; }
.hbar i { display: block; width: 77%; height: 8px; background: #8a8886; border-radius: 4px; }
.corner { background: #fff; }
.cards { display: flex; gap: 8px; margin-top: 3px; }
.card { width: 211px; height: 203px; border: 1px solid #b3b0ad; padding: 4px 12px 0; display: flex; flex-direction: column; justify-content: center; gap: 9px; }
.card span { font-size: 15px; line-height: 20px; color: #605e5c; }
.card strong { font: 500 50px/60px Roboto, sans-serif; }
.charts { display: flex; gap: 9px; margin-top: 33px; }
.region { padding-top: 25px; }
.plot { margin-top: 5px; font-size: 12px; }
.legend { display: flex; align-items: center; font-size: 12px; color: #605e5c; line-height: 20px; margin-top: 8px; }
.legend + .plot { margin-top: 2px; }
.dot { width: 10px; height: 10px; border-radius: 50%; margin: 0 2px 0 1px; background: #118dff; }
.dot.profit { background: #12239e; margin: 0 1px 0 3px; }
.plot text { fill: #605e5c; }
.grid { stroke: #dcdcdc; stroke-dasharray: 2 4; fill: none; }
.line { fill: none; stroke-width: 3; stroke-linecap: round; stroke-linejoin: round; }
.line.sales { stroke: #118dff; }
.line.profit { stroke: #12239e; }
.bar { fill: #118dff; }
.end { text-anchor: end; }
.mid { text-anchor: middle; }
.plot .axis text { fill: #252423; font: 11px Roboto, sans-serif; }
.filters { width: 33px; background: #fff; border-left: 1px solid #aaa; color: #252423; display: flex; flex-direction: column; align-items: center; padding-top: 15px; }
.filters > svg { margin: 19px 0 10px 5px; }
.filters span { writing-mode: vertical-rl; font-size: 14px; font-weight: 600; line-height: 20px; }

.pages { height: 35px; flex: none; display: flex; background: #292929; color: #fff; white-space: nowrap; }
.dev { width: 44px; padding-bottom: 4px; }
.dev.on { background: linear-gradient(#2aab94, #2aab94) 50% 28px / 24px 3px no-repeat; }
.arr { width: 20px; }
.tab { padding: 2px 22px 0; border-right: 1px solid #484848; }
.tab.active { font-weight: 600; border-left: 1px solid #666; box-shadow: inset 0 -4px #2aab94; }
.add { width: 39px; background: #2aab94; }

.viz { width: 182px; border-left: 1px solid #666; border-right: 1px solid #666; color: #fff; display: flex; flex-direction: column; }
.phead { display: flex; justify-content: space-between; align-items: center; padding: 9px 10px 0 8px; }
h3 { font-size: 15px; line-height: 20px; font-weight: 600; }
h4 { font-size: 11px; line-height: 16px; font-weight: 700; }
.viz > h4 { padding: 9px 8px 3px; }
.modes { display: flex; gap: 34px; padding-left: 8px; }
.modes button { width: 32px; height: 32px; }
.modes .on { background: #292929; }
.notch { margin-top: 4px; }
.icons { display: grid; grid-template-columns: repeat(6, 18px); gap: 10px; padding: 10px 0 0 11px; }
.icons svg { width: 18px; height: 18px; }
.b { fill: #0a67c0; stroke: #6fb7f0; }
.g { fill: #666; stroke: #999; }
.g2 { stroke: #888; }
.l { fill: none; stroke: #5aa7e0; }
.num { font-size: 8px; font-weight: 600; fill: #4da2e0; text-anchor: middle; }
.big { font-size: 16px; font-weight: 500; fill: #3d9be8; text-anchor: middle; }
.more { margin: 8px 0 0 13px; height: 19px; width: 14px; font-weight: 700; font-size: 14px; }
.wells { border-top: 1px solid #ddd; margin-top: 10px; padding: 9px 6px 0 4px; }
.wells p, .wells h4 { padding-left: 8px; }
.well { border: 1px dashed #777; height: 28px; line-height: 26px; padding-left: 10px; margin-top: 5px; white-space: nowrap; }
.wells h4 { padding-top: 11px; padding-bottom: 3px; }
.well.dark { background: #000; height: 26px; line-height: 24px; padding-left: 8px; margin-top: 5px; }
.sw { display: flex; justify-content: space-between; align-items: center; height: 27px; padding: 0 16px 0 8px; }
.sw input { position: absolute; opacity: 0; }
.track { width: 32px; height: 16px; border: 1px solid #bbb; border-radius: 8px; display: flex; align-items: center; justify-content: center; gap: 2px; font-size: 9px; color: #bbb; }
.track i { width: 8px; height: 8px; border-radius: 50%; background: #bbb; }
.on .track { background: #2aab94; border-color: #2aab94; color: #1b1b1b; }
.on .track i { background: #1b1b1b; }

.fields { width: 180px; color: #fff; }
.fsearch { display: flex; align-items: center; gap: 5px; margin: 16px 4px 0; height: 24px; padding-left: 12px; background: #242424; border: 1px solid #777; border-radius: 3px; font-size: 13px; color: #a8a8a8; }
.fields li { display: flex; align-items: center; height: 24px; padding-left: 16px; white-space: nowrap; }
.fields ul { padding-top: 10px; }
.fields li svg + svg { margin: 0 3px 0 6px; }
.ex { width: 6px; height: 8px; }
.watermark { position: absolute; right: 60px; bottom: 15px; width: 237px; display: flex; flex-direction: column; color: #777; font-size: 14px; line-height: 20px; }
.watermark b { font-weight: 400; font-size: 19px; line-height: 26px; }

.status { height: 24px; flex: none; display: flex; justify-content: space-between; align-items: center; padding: 0 19px 0 4px; border-bottom: 1px solid #000; }
.zoom { display: flex; align-items: center; gap: 5px; }
.pct { margin: 0 8px; }
.zoom input { width: 100px; height: 12px; appearance: none; background: linear-gradient(#ddd, #ddd) 0 50% / 100% 1px no-repeat; }
.zoom input::-webkit-slider-thumb { appearance: none; width: 4px; height: 11px; background: #ddd; }

.taskbar { height: 40px; flex: none; display: flex; background: #392d25; color: #fff; }
.start { width: 48px; }
.winsearch { width: 288px; display: flex; align-items: center; background: #f2f2f2; border: 1px solid #ccc; color: #3b3b3b; font-size: 14px; padding: 0 9px 0 11px; gap: 11px; }
.winsearch input { flex: 1; }
.apps { display: flex; gap: 1px; padding-left: 1px; }
.apps button { width: 48px; }
.apps .run { background: linear-gradient(#76b9ed, #76b9ed) 50% 100% / 40px 2px no-repeat; }
.apps .cur { background: linear-gradient(#76b9ed, #76b9ed) 50% 100% / 48px 2px no-repeat #635951; }
.badge { font-size: 10px; fill: #fff; text-anchor: middle; }
.tiny { font-size: 8px; fill: #77564f; text-anchor: middle; }
.tray { margin-left: auto; display: flex; align-items: center; gap: 9px; padding-right: 17px; }
.weather { display: flex; align-items: center; gap: 8px; color: #5d544e; font-size: 13px; margin-right: 16px; }
.clock { display: flex; flex-direction: column; align-items: center; line-height: 18px; margin: 0 8px 0 4px; }
```

FILE: chart.js
```javascript
// Each entry is [x, y] of a peak, in the coordinates of the plot.
const sales = [[129,650],[131,647],[138,658],[141,644],[143,650],[149,655],[150,649],[156,651],[159,652],[162,651],[167,653],[171,656],[173,639],[179,651],[185,660],[187,653],[191,612],[192,612],[196,661],[203,644],[209,612],[210,612],[213,655],[216,660],[218,626],[221,647],[224,617],[227,648],[229,628],[230,628],[235,660],[237,645],[242,658],[248,663],[258,660],[263,658],[268,658],[274,660],[278,656],[281,652],[287,652],[294,653],[297,647],[303,648],[308,653],[311,647],[313,612],[314,612],[317,640],[322,638],[338,655],[345,660],[351,653],[354,647],[357,624],[362,652],[368,638],[373,651],[377,650],[387,652],[391,594],[392,594],[400,656],[403,646],[407,642],[410,508],[411,508],[413,642],[416,620],[419,640],[424,652],[428,632],[432,646],[437,651],[441,644],[446,652],[449,658],[460,660],[466,651],[472,660],[476,652],[480,647],[487,648],[491,655],[495,655],[498,600],[502,636],[511,637],[515,642],[518,652],[519,655]];
const up = [[133,600],[138,596],[144,606],[150,598],[152,599],[156,596],[160,592],[166,602],[173,589],[178,596],[185,590],[187,594],[191,588],[195,599],[203,562],[209,561],[210,563],[214,597],[218,598],[222,587],[224,590],[226,560],[229,573],[230,575],[259,582],[263,596],[265,598],[267,600],[272,594],[275,600],[279,605],[284,573],[288,600],[295,573],[299,596],[303,585],[308,595],[312,588],[315,561],[318,594],[324,598],[329,601],[337,587],[343,590],[347,602],[354,589],[357,571],[363,580],[366,599],[370,598],[380,602],[386,602],[391,600],[394,600],[401,517],[402,519],[407,543],[410,582],[416,568],[417,570],[428,597],[432,604],[436,596],[439,588],[441,574],[452,604],[460,603],[465,597],[467,596],[473,602],[480,563],[485,602],[490,599],[493,600],[498,570],[502,593],[507,585],[509,583],[511,573],[515,600],[518,574]];
const down = [[131,627],[138,625],[143,623],[149,632],[154,618],[164,623],[171,622],[182,617],[187,634],[203,635],[208,619],[214,618],[218,621],[233,616],[240,643],[247,617],[259,637],[267,617],[278,630],[297,621],[301,616],[310,621],[317,620],[322,637],[333,616],[345,626],[351,649],[359,619],[365,628],[374,659],[382,635],[393,625],[422,645],[433,629],[443,646],[449,635],[456,627],[460,623],[467,619],[477,627],[483,616],[489,622],[495,660],[506,618],[514,626]];
const spikes = (list, base) => list.map(([x, y]) => `M${x} ${base}V${y + 1}`).join("");
const noise = n => Math.abs(Math.sin(n * 12.9898) * 43758.5453) % 1;
let s = "M130 666", p = "M130 612";
for (let x = 131; x < 520; x++) {
  const low = x > 242 && x < 275 ? 4 : 12;
  s += `L${x} ${(x % 2 ? 666 : 665 - noise(x) * low).toFixed(1)}`;
  const quiet = x > 231 && x < 256 ? 3 : 12;
  p += `L${x} ${(x % 2 ? 613 + noise(x) * quiet / 2 : 611 - noise(x) * quiet).toFixed(1)}`;
}
document.getElementById("sales").setAttribute("d", s + spikes(sales, 666));
document.getElementById("profit").setAttribute("d", p + spikes(up, 612) + spikes(down, 612));
```
